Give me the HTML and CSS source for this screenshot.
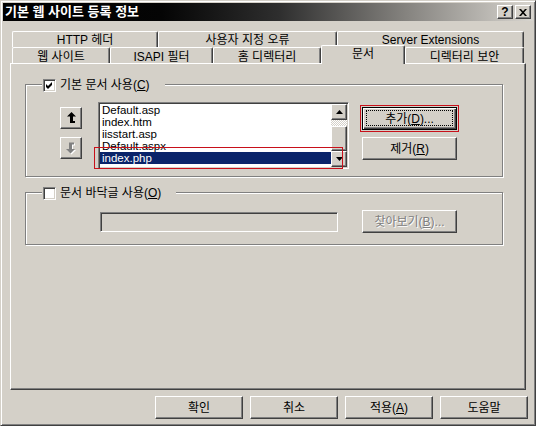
FILE: index.html
```html
<!DOCTYPE html>
<html lang="ko">
<head>
<meta charset="utf-8">
<title>기본 웹 사이트 등록 정보</title>
<link rel="stylesheet" href="styles.css">
</head>
<body>
<div class="window">
  <div class="titlebar">
    <span class="title">기본 웹 사이트 등록 정보</span>
    <div class="tb-buttons">
      <span class="tb-btn help">?</span>
      <span class="tb-btn close"><svg width="8" height="7" viewBox="0 0 8 7"><path d="M0 0H2L4 2.2L6 0H8L5 3.5L8 7H6L4 4.8L2 7H0L3 3.5Z" fill="#000"/></svg></span>
    </div>
  </div>

  <div class="tabs">
    <div class="tab-row row1">
      <div class="tab t-http">HTTP 헤더</div>
      <div class="tab t-err">사용자 지정 오류</div>
      <div class="tab t-ext">Server Extensions</div>
    </div>
    <div class="tab-row row2">
      <div class="tab t-web">웹 사이트</div>
      <div class="tab t-isapi">ISAPI 필터</div>
      <div class="tab t-home">홈 디렉터리</div>
      <div class="tab t-doc selected">문서</div>
      <div class="tab t-sec">디렉터리 보안</div>
    </div>
  </div>

  <div class="panel">
    <div class="group g1">
      <div class="legend">
        <span class="check"><svg width="7" height="7" viewBox="0 0 7 7"><path d="M0 2L2 4L6 0V3L2 7L0 5Z" fill="#000"/></svg></span>
        <span class="legend-text">기본 문서 사용(<u>C</u>)</span>
      </div>
      <div class="g1-body">
        <div class="arrows">
          <div class="btn sq">
            <svg width="9" height="12" viewBox="0 0 9 12"><path d="M4.5 0L9 4.5H6V9H8V11H3V4.5H0Z" fill="#000"/></svg>
          </div>
          <div class="btn sq">
            <svg width="10" height="13" viewBox="0 0 10 13"><path d="M5.5 12.5L10 8H7V3.5H9V1.5H4V8H1Z" fill="#fff"/><path d="M4.5 11.5L9 7H6V2.5H8V0.5H3V7H0Z" fill="#808080"/></svg>
          </div>
        </div>
        <div class="listbox">
          <div class="items">
            <div class="item">Default.asp</div>
            <div class="item">index.htm</div>
            <div class="item">iisstart.asp</div>
            <div class="item">Default.aspx</div>
            <div class="item sel">index.php</div>
          </div>
          <div class="scrollbar">
            <div class="btn sb-btn"><svg width="7" height="4" viewBox="0 0 7 4"><path d="M3.5 0L7 4H0Z" fill="#000"/></svg></div>
            <div class="sb-track"></div>
            <div class="btn sb-thumb"></div>
            <div class="btn sb-btn"><svg width="7" height="4" viewBox="0 0 7 4"><path d="M0 0H7L3.5 4Z" fill="#000"/></svg></div>
          </div>
          <div class="mark"></div>
        </div>
        <div class="btncol">
          <div class="btn wide default">추가(<u>D</u>)...</div>
          <div class="btn wide">제거(<u>R</u>)</div>
        </div>
      </div>
    </div>

    <div class="group g2">
      <div class="legend">
        <span class="check"></span>
        <span class="legend-text">문서 바닥글 사용(<u>O</u>)</span>
      </div>
      <div class="g2-body">
        <div class="field"></div>
        <div class="btn wide browse disabled">찾아보기(<u>B</u>)...</div>
      </div>
    </div>
  </div>

  <div class="footer">
    <div class="btn fbtn">확인</div>
    <div class="btn fbtn">취소</div>
    <div class="btn fbtn">적용(<u>A</u>)</div>
    <div class="btn fbtn">도움말</div>
  </div>
</div>
</body>
</html>
```

FILE: styles.css
```css
html, body {
  margin: 0;
  padding: 0;
}

body {
  width: 536px;
  height: 426px;
  overflow: hidden;
  background: #d4d0c8;
  font-family: "Liberation Sans", "Noto Sans CJK KR", sans-serif;
  font-size: 12px;
  color: #000;
}

.window {
  box-sizing: border-box;
  width: 536px;
  height: 426px;
  background: #d4d0c8;
  border: 1px solid;
  border-color: #d4d0c8 #404040 #404040 #d4d0c8;
  box-shadow: inset 1px 1px #fff, inset -1px -1px #808080;
  padding: 2px;
  display: flex;
  flex-direction: column;
}

/* Title bar */
.titlebar {
  height: 18px;
  flex: none;
  display: flex;
  align-items: center;
  justify-content: space-between;
  background: linear-gradient(to right, #000 0%, #050505 30%, #2e2e2e 52%, #85837f 76%, #d8d5cf 100%);
  padding: 0 2px 0 2px;
}

.title {
  color: #fff;
  font-weight: bold;
  font-size: 13px;
  line-height: 18px;
  white-space: nowrap;
}

.tb-buttons {
  display: flex;
  gap: 2px;
}

.tb-btn {
  box-sizing: border-box;
  width: 16px;
  height: 14px;
  display: flex;
  align-items: center;
  justify-content: center;
  background: #d4d0c8;
  border: 1px solid;
  border-color: #fff #404040 #404040 #fff;
  box-shadow: inset -1px -1px #808080;
  font-weight: bold;
  font-size: 12px;
  line-height: 1;
}

/* Tabs */
.tabs {
  margin-top: 10px;
  padding-left: 9px;
  flex: none;
}

.tab-row {
  display: flex;
  height: 16px;
}

.tab {
  box-sizing: border-box;
  height: 16px;
  flex: none;
  background: #d4d0c8;
  border-top: 1px solid #fff;
  border-left: 1px solid #fff;
  border-right: 1px solid #404040;
  box-shadow: inset -1px 0 #808080;
  border-radius: 2px 2px 0 0;
  text-align: center;
  white-space: nowrap;
  padding-top: 1px;
  line-height: 14px;
}

.row2 .tab {
  padding-top: 2px;
}

.t-http { width: 146px; }
.t-err { width: 179px; }
.t-ext { width: 187px; }
.t-web { width: 98px; }
.t-isapi { width: 103px; }
.t-home { width: 108px; }
.t-doc { width: 84px; }
.t-sec { width: 119px; }

.row2 .tab.selected {
  height: 19px;
  margin-top: -2px;
  margin-bottom: -1px;
  position: relative;
  z-index: 1;
  padding-top: 2px;
  line-height: 12px;
}

/* Panel */
.panel {
  box-sizing: border-box;
  flex: none;
  width: 516px;
  height: 327px;
  margin-left: 7px;
  border-top: 1px solid #fff;
  border-left: 1px solid #fff;
  border-right: 1px solid #404040;
  border-bottom: 1px solid #404040;
  box-shadow: inset -1px -1px #808080;
  padding: 20px 0 0 14px;
}

.group {
  box-sizing: border-box;
  width: 478px;
  border: 1px solid #808080;
  box-shadow: 1px 1px 0 #fff, inset 1px 1px 0 #fff;
  position: relative;
}

.g1 { height: 93px; }
.g2 { height: 53px; margin-top: 15px; }

.legend {
  position: absolute;
  top: -6px;
  left: 16px;
  height: 13px;
  display: flex;
  align-items: center;
  gap: 4px;
  background: #d4d0c8;
  padding: 0 15px 0 1px;
}

.legend-text {
  line-height: 13px;
  white-space: nowrap;
}

.check {
  box-sizing: border-box;
  width: 13px;
  height: 13px;
  background: #fff;
  border: 1px solid;
  border-color: #808080 #fff #fff #808080;
  box-shadow: inset 1px 1px #404040, inset -1px -1px #d4d0c8;
  display: flex;
  align-items: center;
  justify-content: center;
}

.g1-body {
  display: flex;
  align-items: flex-start;
  padding: 17px 0 0 34px;
}

.arrows {
  margin-top: 5px;
  display: flex;
  flex-direction: column;
  gap: 8px;
}

/* Buttons */
.btn {
  box-sizing: border-box;
  display: flex;
  align-items: center;
  justify-content: center;
  background: #d4d0c8;
  border: 1px solid;
  border-color: #fff #404040 #404040 #fff;
  box-shadow: inset -1px -1px #808080;
  white-space: nowrap;
  line-height: 1;
}

.sq {
  width: 22px;
  height: 22px;
}

.wide {
  width: 95px;
  height: 23px;
}

.btn.default {
  position: relative;
  border: 1px solid #000;
  box-shadow: inset 1px 1px #fff, inset -1px -1px #404040, inset -2px -2px #808080;
  outline: 1px solid #c8101a;
  outline-offset: 1px;
}

.btn.default::before {
  content: "";
  position: absolute;
  left: 3px;
  top: 2px;
  right: 3px;
  bottom: 3px;
  border: 1px dotted #000;
}

.disabled {
  color: #808080;
  text-shadow: 1px 1px 0 #fff;
}

/* Listbox */
.listbox {
  position: relative;
  box-sizing: border-box;
  width: 251px;
  height: 67px;
  margin-left: 16px;
  display: flex;
  background: #fff;
  border: 1px solid;
  border-color: #808080 #fff #fff #808080;
  box-shadow: inset 1px 1px #404040, inset -1px -1px #d4d0c8;
  padding: 1px;
}

.items {
  flex: 1;
  overflow: hidden;
}

.item {
  height: 12px;
  line-height: 12px;
  font-size: 11.5px;
  padding-left: 2px;
  white-space: nowrap;
}

.item.sel {
  background: #0a246a;
  color: #fff;
}

.scrollbar {
  width: 16px;
  flex: none;
  display: flex;
  flex-direction: column;
}

.sb-btn {
  height: 16px;
  flex: none;
}

.sb-track {
  height: 6px;
  flex: none;
  background: repeating-conic-gradient(#fff 0 25%, #d4d0c8 0 50%) 0 0 / 2px 2px;
}

.sb-thumb {
  flex: 1;
}

.mark {
  position: absolute;
  left: -5px;
  top: 44px;
  width: 249px;
  height: 22px;
  box-sizing: border-box;
  border: 1px solid #c8101a;
  pointer-events: none;
}

.btncol {
  margin-left: 13px;
  margin-top: 5px;
  display: flex;
  flex-direction: column;
  gap: 7px;
}

/* Group 2 */
.g2-body {
  display: flex;
  align-items: flex-start;
  padding: 19px 0 0 74px;
}

.field {
  box-sizing: border-box;
  width: 238px;
  height: 20px;
  background: #d4d0c8;
  border: 1px solid;
  border-color: #808080 #fff #fff #808080;
  box-shadow: inset 1px 1px #404040, inset -1px -1px #d4d0c8;
}

.browse {
  margin-left: 24px;
  margin-top: -2px;
}

/* Footer */
.footer {
  flex: none;
  margin-top: 6px;
  display: flex;
  justify-content: flex-end;
  gap: 7px;
  padding-right: 5px;
}

.fbtn {
  width: 88px;
  height: 23px;
}
```
